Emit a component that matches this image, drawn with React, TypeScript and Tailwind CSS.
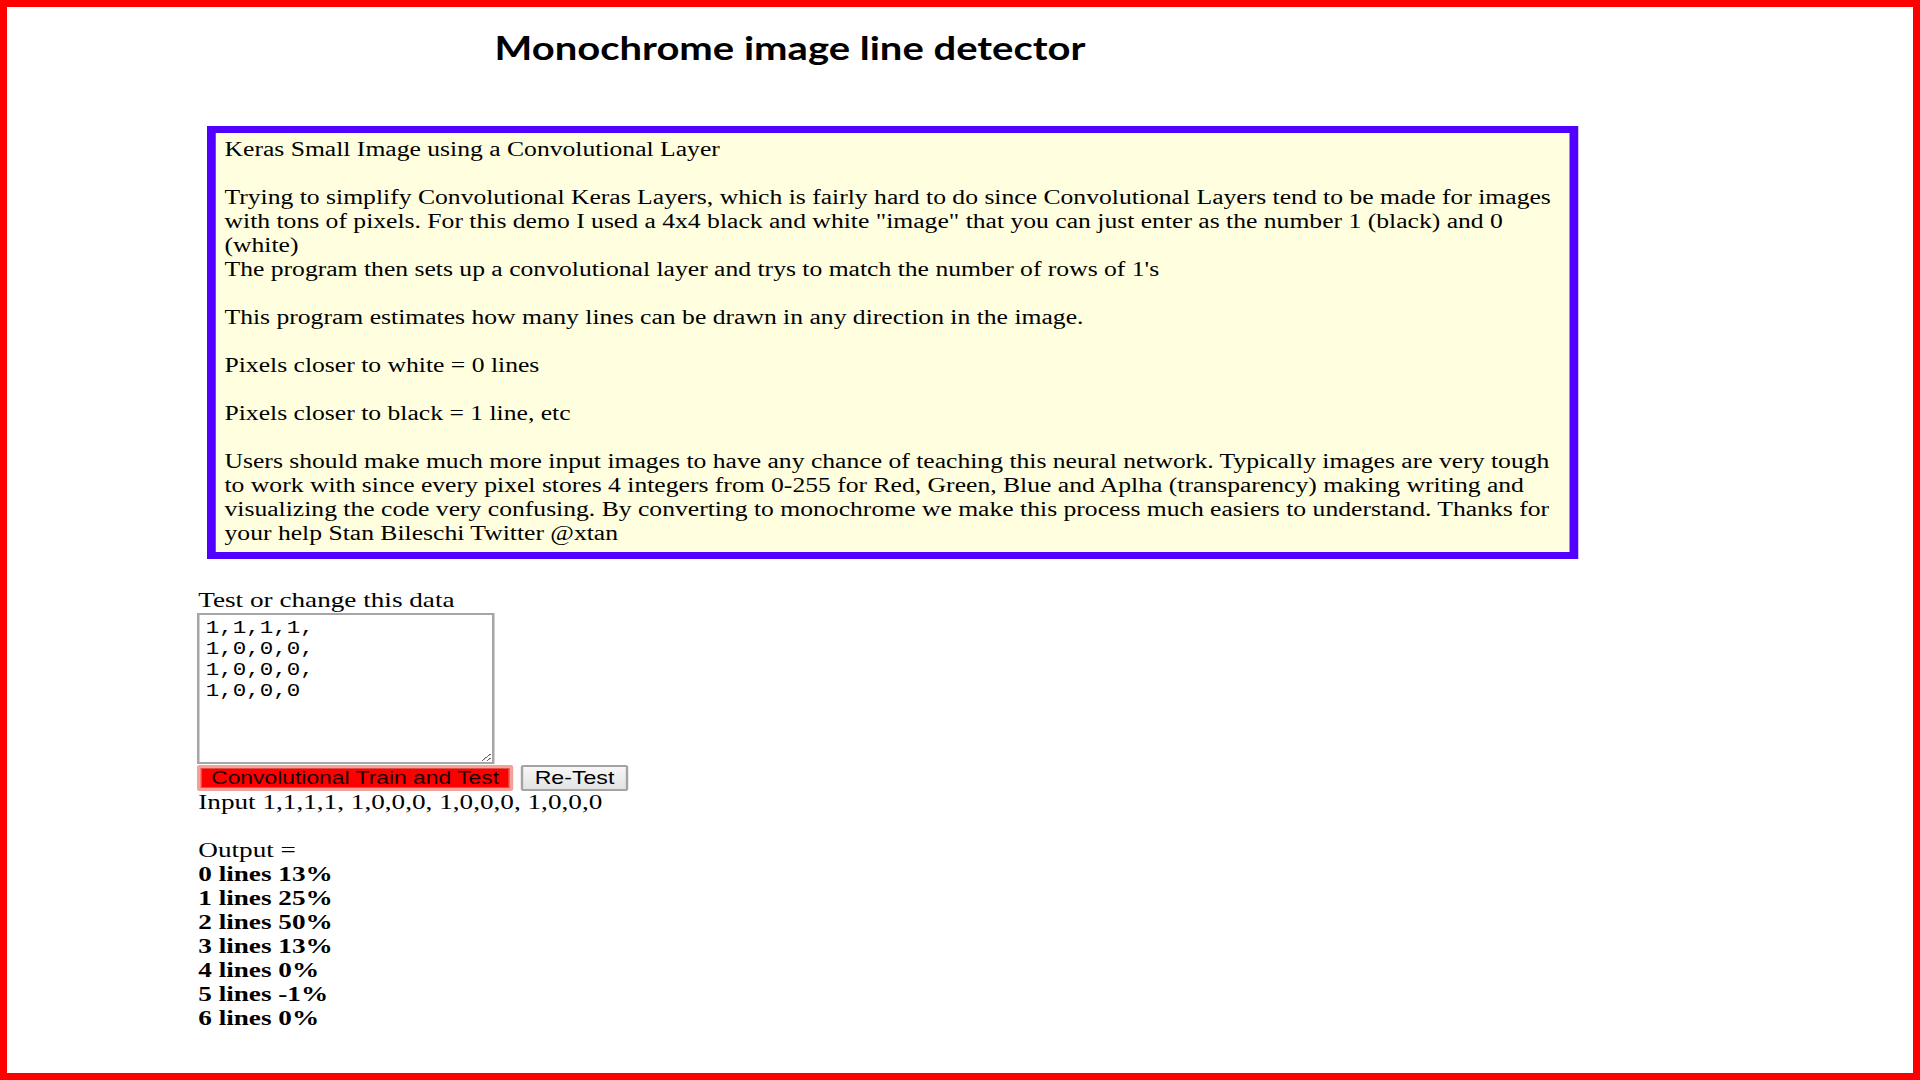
import React from "react";

const outputLines = [
  "0 lines 13%",
  "1 lines 25%",
  "2 lines 50%",
  "3 lines 13%",
  "4 lines 0%",
  "5 lines -1%",
  "6 lines 0%",
];

const App: React.FC = () => {
  return (
    <div className="w-[1920px] h-[1080px] overflow-hidden border-[7px] border-[#ff0000] bg-white">
      {/* page content, stretched wide like the original capture */}
      <div className="w-[1525px] origin-top-left scale-x-125 font-['Liberation_Serif',serif] text-[21.75px] leading-[24px] text-black">
        <h1 className="mt-[23px] ml-[390px] font-['Lato',sans-serif] text-[32px] font-bold leading-[36px]">
          Monochrome image line detector
        </h1>

        {/* Description */}
        <div className="mt-[60px] ml-[160px] w-[1097px] border-[7px] border-[#5200ff] bg-[#ffffe0] pl-[7px] pr-2 pt-1 pb-[7px] text-[20.5px]">
          <div>Keras Small Image using a Convolutional Layer</div>
          <div className="h-6" />
          <div>
            Trying to simplify Convolutional Keras Layers, which is fairly hard
            to do since Convolutional Layers tend to be made for images with
            tons of pixels. For this demo I used a 4x4 black and white "image"
            that you can just enter as the number 1 (black) and 0 (white)
          </div>
          <div>
            The program then sets up a convolutional layer and trys to match
            the number of rows of 1's
          </div>
          <div className="h-6" />
          <div>
            This program estimates how many lines can be drawn in any direction
            in the image.
          </div>
          <div className="h-6" />
          <div>Pixels closer to white = 0 lines</div>
          <div className="h-6" />
          <div>Pixels closer to black = 1 line, etc</div>
          <div className="h-6" />
          <div>
            Users should make much more input images to have any chance of
            teaching this neural network. Typically images are very tough to
            work with since every pixel stores 4 integers from 0-255 for Red,
            Green, Blue and Aplha (transparency) making writing and visualizing
            the code very confusing. By converting to monochrome we make this
            process much easiers to understand. Thanks for your help Stan
            Bileschi Twitter @xtan
          </div>
        </div>

        {/* Test area */}
        <div className="mt-[29px] ml-[152px]">
          <div className="pl-px">Test or change this data</div>
          <textarea
            defaultValue={"1,1,1,1,\n1,0,0,0,\n1,0,0,0,\n1,0,0,0"}
            className="mt-px block h-[151px] w-[238px] border-2 border-[#a6a6a6] bg-white px-[5px] pt-[3px] font-['Liberation_Mono',monospace] text-[18px] leading-[21px] text-black"
          />
          <div className="mt-px flex h-[26px] gap-[6px]">
            <button className="h-[26px] w-[253px] rounded-[2px] border-[3px] border-[#f3a29b] bg-[#ff0000] font-['Liberation_Sans',sans-serif] text-[18.3px] leading-none text-[#1a0000] shadow-[inset_0_0_0_1px_#e0504a]">
              Convolutional Train and Test
            </button>
            <button className="h-[26px] w-[86px] rounded-[2px] border-2 border-[#a3a3a3] bg-gradient-to-b from-[#f7f7f7] to-[#e3e3e3] font-['Liberation_Sans',sans-serif] text-[18.5px] leading-none text-black">
              Re-Test
            </button>
          </div>
          <div className="-mt-px pl-px">Input 1,1,1,1, 1,0,0,0, 1,0,0,0, 1,0,0,0</div>
          <div className="h-6" />
          <div className="pl-px">Output =</div>
          {outputLines.map((line) => (
            <div key={line} className="pl-px font-bold">
              {line}
            </div>
          ))}
        </div>
      </div>
    </div>
  );
};

export default App;
